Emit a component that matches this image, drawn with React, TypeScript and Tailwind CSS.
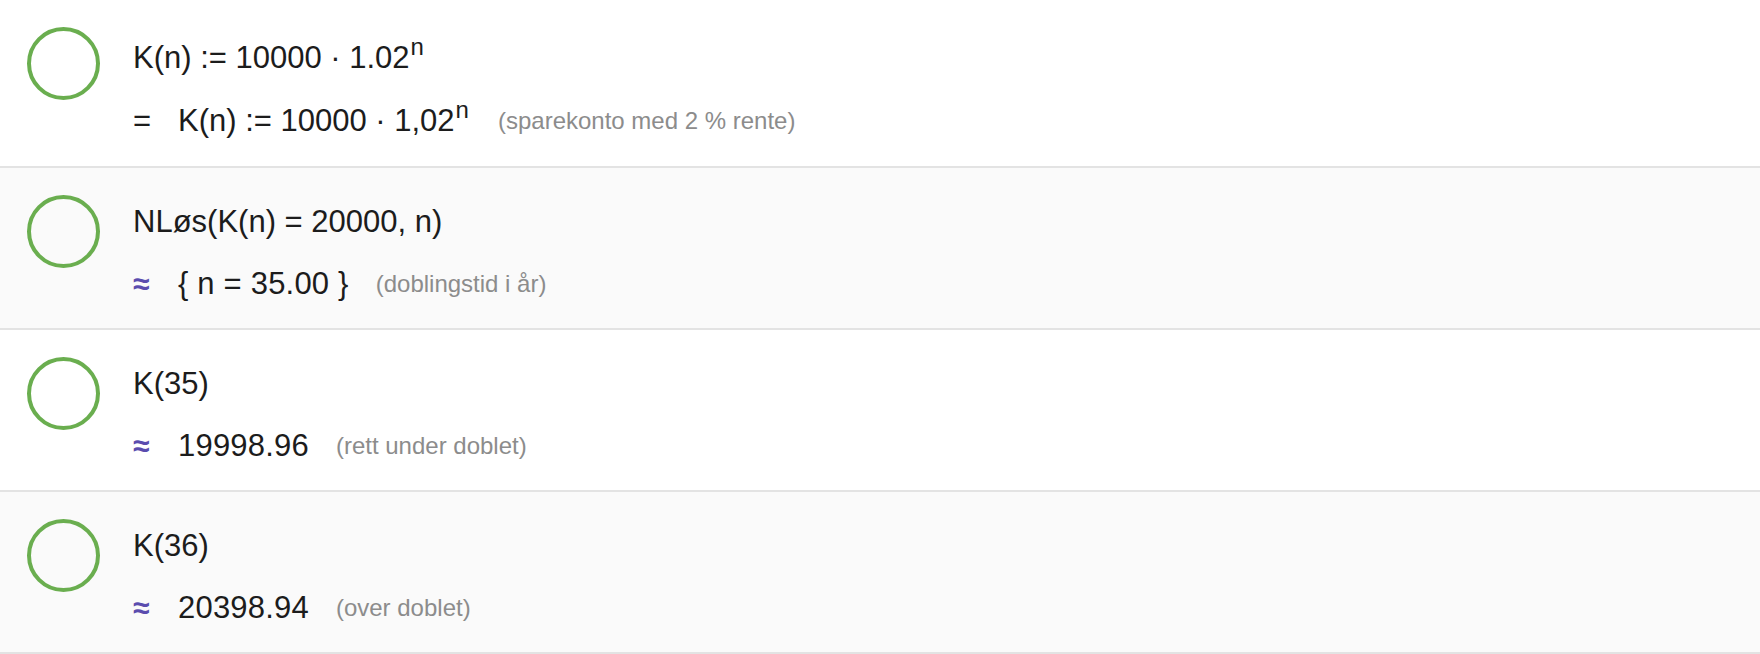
import React from "react";

type Row = {
  input: React.ReactNode;
  sym: string;
  approx: boolean;
  output: React.ReactNode;
  comment: string;
  bg: string;
  first?: boolean;
};

const Sup = ({ children }: { children: React.ReactNode }) => (
  <sup className="text-[24px] relative top-[-13px] ml-[1px]">{children}</sup>
);

const rows: Row[] = [
  {
    input: (
      <>
        K(n) := 10000 · 1.02<Sup>n</Sup>
      </>
    ),
    sym: "=",
    approx: false,
    output: (
      <>
        K(n) := 10000 · 1,02<Sup>n</Sup>
      </>
    ),
    comment: "(sparekonto med 2 % rente)",
    bg: "bg-white",
    first: true,
  },
  {
    input: <>NLøs(K(n) = 20000, n)</>,
    sym: "≈",
    approx: true,
    output: <>{"{ n = 35.00 }"}</>,
    comment: "(doblingstid i år)",
    bg: "bg-[#fafafa]",
  },
  {
    input: <>K(35)</>,
    sym: "≈",
    approx: true,
    output: <>19998.96</>,
    comment: "(rett under doblet)",
    bg: "bg-white",
  },
  {
    input: <>K(36)</>,
    sym: "≈",
    approx: true,
    output: <>20398.94</>,
    comment: "(over doblet)",
    bg: "bg-[#fafafa]",
  },
];

export default function App() {
  return (
    <div
      className="w-[1760px] h-[654px] bg-white text-[#1c1c1c]"
      style={{ fontFamily: '"Liberation Sans", Arial, Helvetica, sans-serif' }}
    >
      {rows.map((r, i) => (
        <div
          key={i}
          className={`${r.bg} flex items-start border-b-2 border-[#e3e3e3] ${
            r.first ? "h-[168px]" : "h-[162px]"
          }`}
        >
          <div className="ml-[27px] mt-[27px] w-[73px] h-[73px] rounded-full border-[4px] border-[#6aae4f] shrink-0" />
          <div
            className={`ml-[33px] flex flex-col ${
              r.first ? "mt-[38px]" : "mt-[34px]"
            }`}
          >
            <div className="h-[40px] leading-[40px] text-[31px] whitespace-nowrap">
              {r.input}
            </div>
            <div
              className={`h-[40px] flex items-center whitespace-nowrap ${
                r.first ? "mt-[23px]" : "mt-[22px]"
              }`}
            >
              <span
                className={`w-[45px] shrink-0 ${
                  r.approx
                    ? "text-[30px] font-bold text-[#5a4cae] leading-[40px]"
                    : "text-[31px] text-[#1c1c1c] leading-[40px]"
                }`}
              >
                {r.sym}
              </span>
              <span
                className={`text-[31px] leading-[40px] ${
                  r.first ? "" : "tracking-[0.2px]"
                }`}
              >
                {r.output}
              </span>
              <span
                className={`text-[24px] text-[#8c8c8c] ${
                  r.first ? "ml-[29px]" : "ml-[27px]"
                }`}
              >
                {r.comment}
              </span>
            </div>
          </div>
        </div>
      ))}
    </div>
  );
}
